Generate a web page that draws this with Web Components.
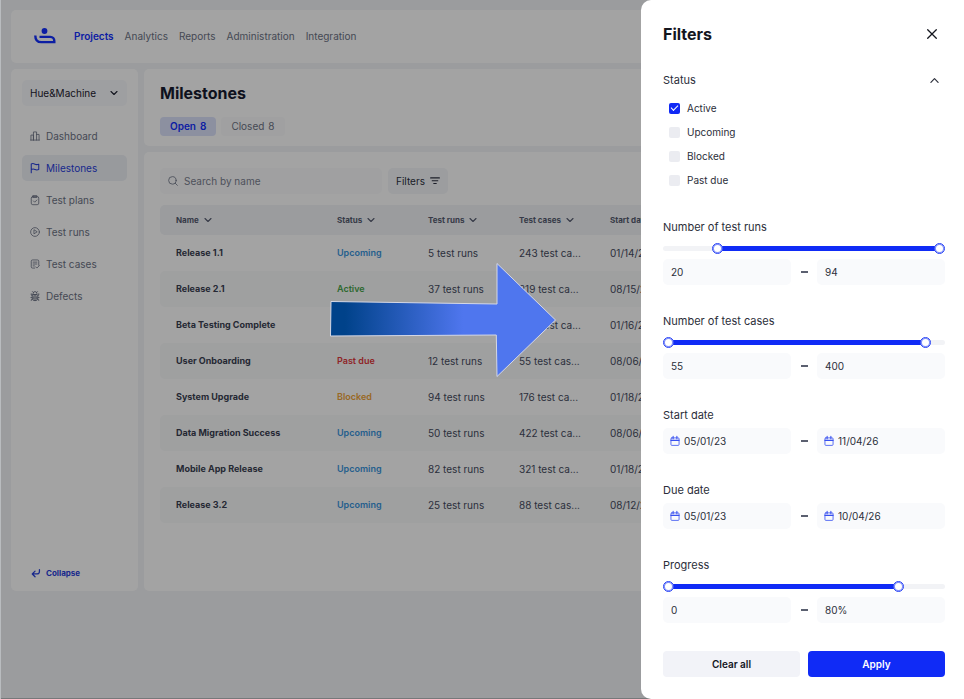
<!DOCTYPE html>
<html lang="en">
<head>
<meta charset="utf-8">
<title>Milestones</title>
<style>
html,body{margin:0;min-height:100%}
body{font:10px/16px Inter,"Liberation Sans",sans-serif;color:#464c60;background:#b9bcbf;overflow:hidden}
</style>
</head>
<body>
<milestones-app></milestones-app>
<script>
const base = `*{box-sizing:border-box}button,input,select{font:inherit;color:inherit;border:0;margin:0;padding:0;background:none;border-radius:0}a{color:inherit;text-decoration:none}svg{display:block;flex:none}`;
const define = (name, html) => customElements.define(name, class extends HTMLElement {
  connectedCallback() {
    if (this.shadowRoot) return;
    const root = this.attachShadow({mode: 'open'});
    const t = document.createElement('template');
    t.innerHTML = typeof html === 'function' ? html(this) : html;
    root.append(t.content.cloneNode(true));
  }
});

const icons = {
  chart: ['0 0 16 16', '<path d="M1.5 14.5V6.5h4v8M5.5 14.5v-13h5v13M10.500 5.500h4v9M1 14.500h14"/>'],
  flag: ['0 0 16 16', '<path d="M2 15.500V1.500c2-1 4-.6 6 .4s4 .8 6 0v8.500c-2 .9-4 .9-6 0s-4-1-6 0" stroke-width="1.700"/>'],
  plan: ['0 0 16 16', '<rect x="2" y="2.500" width="12" height="13" rx="2.500"/><path d="M5 1h6v3H5zM5.500 9.500l2 2 3.500-3.500"/>'],
  play: ['0 0 16 16', '<circle cx="8" cy="8" r="7"/><path d="M6.300 5v6L11 8z"/>'],
  cases: ['0 0 16 16', '<path d="M7.500 14.500H4a2 2 0 0 1-2-2v-9a2 2 0 0 1 2-2h8a2 2 0 0 1 2 2V10M5 5h6M5 8h6M5 11h2M9 12.500l2 2 4-4"/>'],
  bug: ['0 0 16 16', '<path d="M5 5V4a3 3 0 0 1 6 0v1zM4.500 6h7a1 1 0 0 1 1 1v4.500a4.500 4 0 0 1-9 0V7a1 1 0 0 1 1-1zM8 6.500V15M4 1l1.500 1.500M12 1l-1.500 1.500M2 4.500v2l1.500 1M14 4.500v2l-1.500 1M1.500 10.500h2M12.500 10.500h2M2 15v-1l2-1.500M14 15v-1l-2-1.500M6 9v3.500M10 9v3.500" stroke-width="1.500"/>'],
  collapse: ['0 0 16 16', '<path d="M13.500 2.500v3a4 4 0 0 1-4 4H3M6.500 5L2 9.500 6.500 14" stroke-width="2"/>'],
  search: ['0 0 16 16', '<circle cx="7" cy="7" r="6"/><path d="M11.500 11.500l3.500 3.500"/>'],
  lines: ['0 0 16 16', '<path d="M1 3h14M3.500 7.500h9M6 12h4" stroke-width="1.800"/>'],
  down: ['0 0 10 10', '<path d="M2 3.500L5 6.500 8 3.500" stroke-width="1.100"/>'],
  up: ['0 0 10 10', '<path d="M1 7L5 3 9 7" stroke-width="1.300"/>'],
  close: ['0 0 10 10', '<path d="M.7.700l8.600 8.600M9.300.700L.7 9.300" stroke-width="1.300"/>'],
  calendar: ['0 0 16 16', '<rect x="1.500" y="3" width="13" height="12" rx="1.500"/><path d="M1.500 7h13M5 .5v4M11 .5v4" stroke-width="1.700"/>']
};
define('ui-icon', el => {
  const [box, shape] = icons[el.getAttribute('name')];
  return `<style>${base}:host{display:block;flex:none;width:10px;height:10px}svg{width:100%;height:100%;overflow:visible}</style>
  <svg viewBox="${box}" fill="none" stroke="currentColor" stroke-width="1.300" stroke-linejoin="round" stroke-linecap="round" aria-hidden="true">${shape}</svg>`;
});

define('ui-card', `<style>:host{display:block;box-sizing:border-box;background:#fff;border-radius:5px}</style><slot></slot>`);

define('top-bar', `<style>${base}
  :host{display:block}
  header{display:flex;align-items:center;height:53px;padding:0 23px 2px}
  nav{display:flex;gap:11px;margin-left:18px;color:#6d7385}
  .on{color:#1330ff;font-weight:600}
</style>
<ui-card><header>
  <svg width="22" height="17" viewBox="0 0 22 17" role="img" aria-label="Home"><circle cx="10.500" cy="4" r="2.900" fill="#1330ff"/><path d="M1.300 8.400c0 4 2 6.700 6 6.700h13v-1c0-2.300-1.500-4.200-4-4.200H5.500" fill="none" stroke="#1330ff" stroke-width="2.400"/></svg>
  <nav aria-label="Main"><a class="on" href="#projects">Projects</a><a href="#analytics">Analytics</a><a href="#reports">Reports</a><a href="#administration">Administration</a><a href="#integration">Integration</a></nav>
</header></ui-card>`);

define('side-item', el => `<style>${base}
  :host{display:block}
  a{display:flex;align-items:center;gap:6px;height:26px;padding:0 8px;border-radius:5px;color:#6d7385}
  :host([active]) a{background:#eef1f6;color:#2940dc}
</style><a href="#${el.getAttribute('icon')}"><ui-icon name="${el.getAttribute('icon')}"></ui-icon><slot></slot></a>`);

define('side-bar', `<style>${base}
  :host{display:grid}
  ui-card{display:flex;flex-direction:column;padding:11px 11px 10px}
  .pick{position:relative;color:#1d2130}
  select{appearance:none;width:100%;height:26px;padding:0 8px;background:#f8f9fc;border-radius:5px}
  .pick ui-icon{position:absolute;right:8px;top:8px;pointer-events:none}
  nav{display:grid;gap:6px;margin-top:17px}
  button{display:flex;align-items:center;gap:5px;margin-top:auto;height:16px;padding-left:9px;font-size:8px;font-weight:700;color:#2940dc}
</style>
<ui-card>
  <div class="pick"><select aria-label="Project"><option>Hue&amp;Machine</option></select><ui-icon name="down"></ui-icon></div>
  <nav aria-label="Project pages">
    <side-item icon="chart">Dashboard</side-item><side-item icon="flag" active>Milestones</side-item><side-item icon="plan">Test plans</side-item><side-item icon="play">Test runs</side-item><side-item icon="cases">Test cases</side-item><side-item icon="bug">Defects</side-item>
  </nav>
  <button type="button"><ui-icon name="collapse"></ui-icon>Collapse</button>
</ui-card>`);

define('page-head', `<style>${base}
  :host{display:block}
  ui-card{padding:14px 16px 10px}
  h1{margin:0;font-size:16px;line-height:20px;font-weight:700;color:#171b30}
  div{display:flex;gap:5px;margin-top:14px}
  button{display:flex;gap:4px;align-items:center;height:19px;padding:0 10px 1px;border-radius:4px;background:#fafbfc;color:#6d7385}
  .on{background:#dbe2fb;color:#1330ff;font-weight:600}
</style>
<ui-card><h1>Milestones</h1><div><button type="button" class="on"><span>Open</span><span>8</span></button><button type="button"><span>Closed</span><span>8</span></button></div></ui-card>`);

const rows = [
  ['Release 1.1', 'Upcoming', '5 test runs', '243 test ca...', '01/14/25'],
  ['Release 2.1', 'Active', '37 test runs', '219 test ca...', '08/15/25'],
  ['Beta Testing Complete', '', '', '208 test ca...', '01/16/25'],
  ['User Onboarding', 'Past due', '12 test runs', '55 test cas...', '08/06/25'],
  ['System Upgrade', 'Blocked', '94 test runs', '176 test ca...', '01/18/25'],
  ['Data Migration Success', 'Upcoming', '50 test runs', '422 test ca...', '08/06/25'],
  ['Mobile App Release', 'Upcoming', '82 test runs', '321 test ca...', '01/18/25'],
  ['Release 3.2', 'Upcoming', '25 test runs', '88 test cas...', '08/12/25']
];
define('milestone-table', () => `<style>${base}
  :host{display:block;margin-top:11px}
  table{width:100%;table-layout:fixed;border-collapse:separate;border-spacing:0;text-align:left;white-space:nowrap}
  .name{width:161px}.col{width:91px}
  th,td{padding:0 0 0 16px}
  thead th{height:30px;background:#f2f4f7;font-size:8px;font-weight:700;color:#565c70}
  thead button{display:flex;align-items:center;gap:4px;font-weight:700}
  tbody th{font-size:9px;font-weight:700;color:#3a3f52}
  tbody tr{height:36px}
  tbody tr:nth-child(even)>*{background:#f9fafb}
  tr>:first-child{border-radius:5px 0 0 5px}
  tr>:last-child{border-radius:0 5px 5px 0}
  .s{font-size:9px;font-weight:600}
  .Upcoming{color:#3b96dd}.Active{color:#4aa54b}.Past{color:#e0393c}.Blocked{color:#f0a337}
</style>
<table><colgroup><col class="name"><col class="col"><col class="col"><col class="col"><col></colgroup>
<thead><tr>${['Name', 'Status', 'Test runs', 'Test cases', 'Start date'].map(h => `<th scope="col"><button type="button">${h}<ui-icon name="down"></ui-icon></button></th>`).join('')}</tr></thead>
<tbody>${rows.map(r => `<tr><th scope="row">${r[0]}</th><td class="s ${r[1].split(' ')[0]}">${r[1]}</td><td>${r[2]}</td><td>${r[3]}</td><td>${r[4]}</td></tr>`).join('')}</tbody></table>`);

define('milestone-list', `<style>${base}
  :host{display:block}
  ui-card{padding:16px 16px 68px}
  .tools{display:flex;gap:6px}
  label{display:flex;align-items:center;gap:6px;width:222px;height:26px;padding:0 8px;border-radius:5px;background:#fafbfc;color:#6d7385}
  input{flex:1;min-width:0;outline:0}
  input::placeholder{color:#7b8090;opacity:1}
  button{display:flex;align-items:center;gap:5px;height:26px;padding:0 8px;border-radius:5px;background:#f4f6f9;color:#2c3040}
</style>
<ui-card><div class="tools"><label><ui-icon name="search"></ui-icon><input type="search" aria-label="Search by name" placeholder="Search by name"></label><button type="button">Filters<ui-icon name="lines"></ui-icon></button></div>
<milestone-table></milestone-table></ui-card>`);

define('check-row', el => `<style>${base}
  :host{display:block}
  label{display:flex;align-items:center;gap:7px;height:24px}
  input{appearance:none;display:grid;place-items:center;width:11px;height:11px;border-radius:2px;background:#ebecf1}
  input:checked{background:#1029f5}
  input:checked::after{content:"";width:6px;height:3px;border:solid #fff;border-width:0 0 1px 1px;transform:translateY(-1px) rotate(-45deg)}
</style><label><input type="checkbox" ${el.hasAttribute('checked') ? 'checked' : ''}><slot></slot></label>`);

define('range-slider', el => `<style>${base}
  :host{display:grid;height:11px;margin-top:8px;align-items:center}
  .track,input{grid-area:1/1}
  .track{height:5px;border-radius:3px;background:#f2f3f6;padding:0 5px}
  .fill{display:block;height:5px;background:#102bf6;margin-left:${el.getAttribute('from')}%;width:${el.getAttribute('to') - el.getAttribute('from')}%}
  input{appearance:none;width:100%;height:11px;pointer-events:none}
  input::-webkit-slider-thumb{appearance:none;pointer-events:auto;width:11px;height:11px;border:1px solid #2742f5;box-shadow:inset 0 0 0 1px #7d8df9;border-radius:50%;background:#fff}
</style><span class="track"><span class="fill"></span></span>
<input type="range" min="0" max="100" value="${el.getAttribute('from')}" aria-label="${el.getAttribute('label')} from"><input type="range" min="0" max="100" value="${el.getAttribute('to')}" aria-label="${el.getAttribute('label')} to">`);

define('filter-range', el => {
  const label = el.getAttribute('label'), date = el.hasAttribute('date');
  const field = (key, word) => `<label>${date ? '<ui-icon name="calendar"></ui-icon>' : ''}<input type="text" aria-label="${label} ${word}" value="${el.getAttribute(key)}"></label>`;
  return `<style>${base}
  :host{display:block}
  h3{margin:0;font-size:11px;line-height:16px;font-weight:400}
  .pair{display:grid;grid-template-columns:minmax(0,1fr) 26px minmax(0,1fr);align-items:center;margin-top:5px;padding-bottom:1px}
  label{display:flex;align-items:center;gap:4px;height:26px;padding:0 ${date ? 7 : 8}px;border-radius:5px;background:#f9fafc}
  input{flex:1;min-width:0}
  ui-icon{color:#3850f0}
  i{justify-self:center;width:7px;height:2px;background:#5b6070}
</style><h3>${label}</h3>
${el.hasAttribute('lo') ? `<range-slider label="${label}" from="${el.getAttribute('lo')}" to="${el.getAttribute('hi')}"></range-slider>` : ''}
<div class="pair">${field('from', 'from')}<i></i>${field('to', 'to')}</div>`;
});

define('filter-panel', `<style>${base}
  :host{display:block;background:#fff;color:#2b2e3a;border-radius:10px 0 0 10px;overflow:auto}
  form{display:flex;flex-direction:column;gap:27px;padding:22px 19px 21px 22px}
  header{display:flex;align-items:center;justify-content:space-between;height:24px}
  h2{margin:0;font-size:16px;line-height:24px;font-weight:700;color:#14161e}
  header button{margin-right:8px;color:#14161e}
  .status{margin-top:-1px}
  .status button{display:flex;justify-content:space-between;align-items:center;width:100%;height:16px;padding-right:6px;font-size:11px}
  .status button ui-icon{width:9px;height:9px}
  .list{padding:8px 0 0 6px}
  footer{display:grid;grid-template-columns:1fr 1fr;gap:8px}
  footer button{height:26px;border-radius:4px;background:#f2f3f8;color:#14161e;font-weight:600}
  footer .go{background:#102bf6;color:#fff}
</style>
<form>
  <header><h2>Filters</h2><button type="button" aria-label="Close"><ui-icon name="close"></ui-icon></button></header>
  <section class="status"><button type="button" aria-expanded="true">Status<ui-icon name="up"></ui-icon></button>
    <div class="list"><check-row checked>Active</check-row><check-row>Upcoming</check-row><check-row>Blocked</check-row><check-row>Past due</check-row></div></section>
  <filter-range label="Number of test runs" lo="18" hi="100" from="20" to="94"></filter-range>
  <filter-range label="Number of test cases" lo="0" hi="95" from="55" to="400"></filter-range>
  <filter-range label="Start date" date from="05/01/23" to="11/04/26"></filter-range>
  <filter-range label="Due date" date from="05/01/23" to="10/04/26"></filter-range>
  <filter-range label="Progress" lo="0" hi="85" from="0" to="80%"></filter-range>
  <footer><button type="button">Clear all</button><button type="button" class="go">Apply</button></footer>
</form>`);

define('pointer-arrow', `<style>:host{display:block}svg{display:block}</style>
<svg width="230" height="118" viewBox="0 0 230 118" aria-hidden="true"><defs><linearGradient id="g" gradientUnits="userSpaceOnUse" x1="16" y1="0" x2="134" y2="0"><stop stop-color="#00428a"/><stop offset="1" stop-color="#4f76ee"/></linearGradient></defs>
<path d="M2 40.500L168 43V2.500L226.500 59 168 115.500l-.7-41.500L1.500 75z" fill="url(#g)" stroke="#d5d8e6" stroke-width="1"/></svg>`);

define('milestones-app', `<style>${base}
  :host{display:block;min-height:100vh;position:relative;padding:0 0 1px 1px}
  main{display:grid;grid-template-columns:127px minmax(0,1fr);gap:6px;align-content:start;min-height:calc(100vh - 1px);padding:10px 11px 10px 10px;background:#f2f4f7}
  top-bar{grid-column:1/-1}
  .content{display:grid;gap:6px}
  .shade{position:absolute;inset:0 0 1px 1px;background:rgba(0,0,0,.36)}
  filter-panel{position:absolute;inset:0 0 1px auto;width:323px}
  pointer-arrow{position:absolute;left:329px;top:261px}
</style>
<main><top-bar></top-bar><side-bar></side-bar><div class="content"><page-head></page-head><milestone-list></milestone-list></div></main>
<div class="shade"></div><pointer-arrow></pointer-arrow><filter-panel></filter-panel>`);
</script>
</body>
</html>
